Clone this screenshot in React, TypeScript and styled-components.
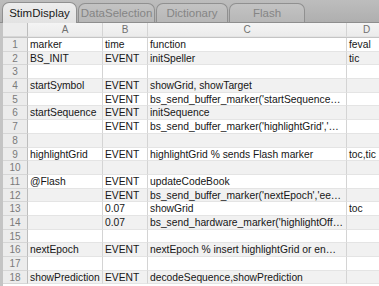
import * as React from 'react';
import styled, { createGlobalStyle } from 'styled-components';

const Global = createGlobalStyle`
  html, body {
    margin: 0;
    padding: 0;
    overflow: hidden;
    background: #ffffff;
  }
  body {
    font-family: 'Liberation Sans', Arial, sans-serif;
  }
`;

const Window = styled.div`
  width: 379px;
  height: 286px;
  display: flex;
  flex-direction: column;
  overflow: hidden;
  background: #ffffff;
`;

const TabBar = styled.div`
  height: 23px;
  flex: none;
  display: flex;
  align-items: flex-end;
  padding-left: 2px;
  background: linear-gradient(#bdbdbd, #afafaf);
  border-bottom: 1px solid #8e8e8e;
  box-sizing: border-box;
`;

const Tab = styled.div<{ $active?: boolean; $w: number }>`
  width: ${p => p.$w}px;
  box-sizing: border-box;
  margin-right: 1px;
  display: flex;
  align-items: center;
  justify-content: center;
  font-size: 11.5px;
  color: ${p => (p.$active ? '#1a1a1a' : '#858585')};
  background: ${p =>
    p.$active ? 'linear-gradient(#ededed, #e2e2e2)' : 'linear-gradient(#c3c3c3, #b7b7b7)'};
  border: 1px solid #909090;
  border-bottom: none;
  border-radius: 7px 7px 0 0;
  margin-bottom: ${p => (p.$active ? '-1px' : '0')};
  height: ${p => (p.$active ? '21px' : '19px')};
`;

const Sheet = styled.div`
  flex: 1;
  display: flex;
  flex-direction: column;
  border-left: 3px solid #c4c4c4;
`;

const Row = styled.div<{ $shade?: boolean; $h?: number }>`
  display: flex;
  height: ${p => p.$h ?? 13.7}px;
  flex: none;
  background: ${p => (p.$shade ? '#f1f1f1' : '#ffffff')};
`;

const HeaderRow = styled(Row)`
  background: linear-gradient(#f4f4f4, #ebebeb);
  border-bottom: 1px solid #c4c4c4;
  box-sizing: border-box;
`;

const Cell = styled.div<{ $w: number; $head?: boolean }>`
  width: ${p => p.$w}px;
  flex: none;
  box-sizing: border-box;
  padding: 0 2px;
  border-right: 1px solid #d4d4d4;
  border-bottom: 1px solid #e4e4e4;
  white-space: nowrap;
  overflow: hidden;
  line-height: 13px;
  color: ${p => (p.$head ? '#707070' : '#161616')};
  text-align: ${p => (p.$head ? 'center' : 'left')};
  font-size: ${p => (p.$head ? '10px' : '10.3px')};
`;

const NumCell = styled.div`
  width: 25px;
  flex: none;
  box-sizing: border-box;
  background: #ececec;
  border-right: 1px solid #bdbdbd;
  border-bottom: 1px solid #d6d6d6;
  color: #7a7a7a;
  text-align: center;
  line-height: 13px;
  font-size: 10px;
`;

const widths = [75, 45, 199, 40];

const tabs = [
  { name: 'StimDisplay', w: 75, active: true },
  { name: 'DataSelection', w: 77 },
  { name: 'Dictionary', w: 72 },
  { name: 'Flash', w: 76 },
];

const rows: string[][] = [
  ['marker', 'time', 'function', 'feval'],
  ['BS_INIT', 'EVENT', 'initSpeller', 'tic'],
  ['', '', '', ''],
  ['startSymbol', 'EVENT', 'showGrid, showTarget', ''],
  ['', 'EVENT', "bs_send_buffer_marker('startSequence…", ''],
  ['startSequence', 'EVENT', 'initSequence', ''],
  ['', 'EVENT', "bs_send_buffer_marker('highlightGrid','…", ''],
  ['', '', '', ''],
  ['highlightGrid', 'EVENT', 'highlightGrid % sends Flash marker', 'toc,tic'],
  ['', '', '', ''],
  ['@Flash', 'EVENT', 'updateCodeBook', ''],
  ['', 'EVENT', "bs_send_buffer_marker('nextEpoch','ee…", ''],
  ['', '0.07', 'showGrid', 'toc'],
  ['', '0.07', "bs_send_hardware_marker('highlightOff…", ''],
  ['', '', '', ''],
  ['nextEpoch', 'EVENT', 'nextEpoch % insert highlightGrid or en…', ''],
  ['', '', '', ''],
  ['showPrediction', 'EVENT', 'decodeSequence,showPrediction', ''],
];

export default function App() {
  return (
    <>
      <Global />
      <Window>
        <TabBar>
          {tabs.map(t => (
            <Tab key={t.name} $w={t.w} $active={t.active}>
              {t.name}
            </Tab>
          ))}
        </TabBar>
        <Sheet>
          <HeaderRow $h={15}>
            <NumCell />
            {['A', 'B', 'C', 'D'].map((l, i) => (
              <Cell key={l} $w={widths[i]} $head>
                {l}
              </Cell>
            ))}
          </HeaderRow>
          {rows.map((r, i) => (
            <Row key={i} $shade={i % 2 === 1}>
              <NumCell>{i + 1}</NumCell>
              {r.map((v, j) => (
                <Cell key={j} $w={widths[j]}>
                  {v}
                </Cell>
              ))}
            </Row>
          ))}
        </Sheet>
      </Window>
    </>
  );
}
